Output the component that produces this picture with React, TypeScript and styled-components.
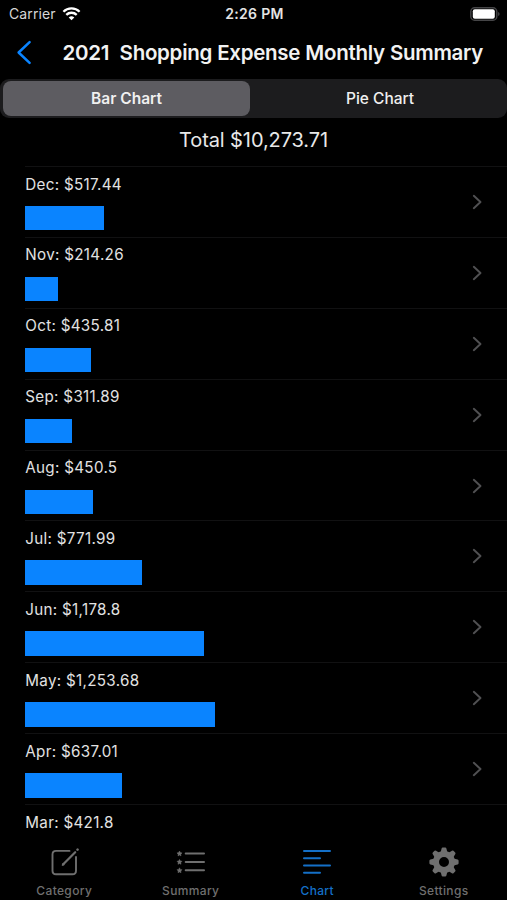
import React from 'react';
import styled, { createGlobalStyle } from 'styled-components';

const GlobalStyle = createGlobalStyle`
  * { box-sizing: border-box; }
  body { margin: 0; background: #000; overflow: hidden; }
`;

const Screen = styled.div`
  width: 507px;
  height: 900px;
  display: flex;
  flex-direction: column;
  overflow: hidden;
  background: #000;
  color: #f2f2f2;
  font-family: Inter, 'Liberation Sans', sans-serif;
  white-space: pre;
`;

const StatusBar = styled.header`
  flex: none;
  height: 27px;
  display: grid;
  grid-template-columns: 1fr auto 1fr;
  align-items: center;
  padding: 1px 7px 0 9px;
  font-size: 14px;
  line-height: 18px;
`;

const Carrier = styled.div`
  display: flex;
  align-items: center;
  gap: 6px;
  letter-spacing: 0.12px;
  color: #d6d6d6;
`;

const Clock = styled.div`
  font-weight: 600;
  letter-spacing: 0.3px;
  color: #e4e4e4;
`;

const Power = styled.div`
  display: flex;
  justify-content: flex-end;
`;

const NavBar = styled.nav`
  flex: none;
  height: 52px;
  display: flex;
  align-items: center;
  padding: 0 0 1px 16px;
`;

const BackButton = styled.button`
  display: flex;
  width: 46.6px;
  padding: 0;
  border: 0;
  background: none;
`;

const Title = styled.h1`
  margin: 0;
  font-size: 20.5px;
  font-weight: 600;
  line-height: 26px;
  letter-spacing: -0.28px;
  word-spacing: 0.3px;
`;

const Segments = styled.div`
  flex: none;
  display: grid;
  grid-template-columns: 247px 1fr;
  height: 39px;
  padding: 2px 0 2px 3px;
  border-radius: 9px;
  background: #1c1c1e;
`;

const Segment = styled.button<{ $active?: boolean }>`
  padding: 1px 0 0 ${(p) => (p.$active ? '0' : '3px')};
  border: 0;
  border-radius: 8px;
  background: ${(p) => (p.$active ? '#5d5c61' : 'transparent')};
  color: #f0f0f0;
  font: ${(p) => (p.$active ? 600 : 500)} 15.5px/20px Inter, sans-serif;
`;

const Total = styled.div`
  flex: none;
  height: 48px;
  padding-top: 9px;
  text-align: center;
  font-size: 20px;
  line-height: 26px;
  letter-spacing: -0.1px;
  color: #e8e8e8;
`;

const List = styled.main`
  flex: 1;
  min-height: 0;
  overflow: hidden;
`;

const Row = styled.div`
  height: 70.9px;
  margin-left: 25.3px;
  padding-right: 25px;
  border-top: 1px solid #111112;
  display: flex;
  align-items: center;
  justify-content: space-between;
`;

const Entry = styled.div`
  align-self: flex-start;
  padding-top: 7.5px;
`;

const Label = styled.div`
  height: 31.5px;
  font-size: 15.2px;
  line-height: 20px;
  letter-spacing: 0.3px;
  color: #e2e2e2;
`;

const Bar = styled.div`
  height: 24.4px;
  background: #0a84ff;
`;

const TabBar = styled.footer`
  flex: none;
  height: 68px;
  display: grid;
  grid-template-columns: repeat(4, 126.5px);
  padding: 7px 0 0 1px;
`;

const Tab = styled.button<{ $active?: boolean }>`
  display: flex;
  flex-direction: column;
  align-items: center;
  padding: 7px 0 0;
  border: 0;
  background: none;
  color: ${(p) => (p.$active ? '#1470c8' : '#6f6f6f')};
`;

const TabLabel = styled.span`
  margin-top: 5px;
  font: 500 12px/16px Inter, sans-serif;
  letter-spacing: 0.35px;
`;

const WifiIcon = () => (
  <svg width="19" height="14" viewBox="0 0 18 14" fill="none" stroke="#fff" strokeWidth="2.3">
    <path d="M.9 4.700a11.500 11.500 0 0 1 16.200 0M3.800 7.900a7.400 7.400 0 0 1 10.400 0" />
    <path d="M9 13.300 6.200 10.500a4 4 0 0 1 5.600 0z" fill="#fff" stroke="none" />
  </svg>
);

const BatteryIcon = () => (
  <svg width="30" height="14" viewBox="0 0 30 14">
    <rect x=".8" y=".8" width="26" height="12.400" rx="3.800" fill="none" stroke="#454547" strokeWidth="1.400" />
    <rect x="2.800" y="2.300" width="22" height="9.400" rx="2" fill="#fff" />
    <path d="M28.300 5a2.300 2.300 0 0 1 0 4z" fill="#59595b" />
  </svg>
);

const BackIcon = () => (
  <svg width="16" height="25" viewBox="0 0 16 25" fill="none" stroke="#0a84ff" strokeWidth="2.5" strokeLinecap="round" strokeLinejoin="round">
    <path d="M13.600 2.200 2.600 12.500 13.600 22.800" />
  </svg>
);

const DisclosureIcon = () => (
  <svg width="12" height="16" viewBox="0 0 12 16" fill="none" stroke="#505052" strokeWidth="1.9" strokeLinecap="round" strokeLinejoin="round">
    <path d="M3.800 1.800 10.500 8l-6.700 6.200" />
  </svg>
);

const ComposeIcon = () => (
  <svg width="32" height="32" viewBox="0 0 32 32" fill="none" stroke="currentColor" strokeWidth="1.9" strokeLinecap="round" strokeLinejoin="round">
    <path d="M21.500 4.900H8Q4.500 4.900 4.500 8.400V24.800q0 3.500 3.500 3.500H24.500q3.500 0 3.500-3.500V11" />
    <path d="M15 18.500 27.200 6.200" strokeWidth="2.200" />
    <path d="m29.500 3.700.1-.1" strokeWidth="2.600" />
    <path d="m14.200 19.200.7-2 1.300 1.300z" fill="currentColor" strokeWidth=".7" />
  </svg>
);

const starPath = (y: number) =>
  `M4.500 ${y - 2.5}l.8 1.600 1.700.3-1.200 1.300.2 1.700L4.500 ${y + 1.6}l-1.500.8.2-1.700L2 ${y - 0.6}l1.700-.3z`;

const ListIcon = () => (
  <svg width="32" height="32" viewBox="0 0 32 32">
    {[7.5, 15.9, 24.3].map((y) => (
      <g key={y}>
        <path d={starPath(y)} fill="currentColor" stroke="currentColor" strokeWidth=".5" />
        <path d={`M10.700 ${y}h18.300`} stroke="currentColor" strokeWidth="2" strokeLinecap="round" />
      </g>
    ))}
  </svg>
);

const ChartIcon = () => (
  <svg width="32" height="32" viewBox="0 0 32 32" fill="none" stroke="currentColor" strokeWidth="2" strokeLinecap="round">
    <path d="M3 5h26M3 12.200h16M3 19.500h26M3 26.700h16" />
  </svg>
);

const GearIcon = () => (
  <svg width="32" height="32" viewBox="-16 -16 32 32" fill="none" stroke="currentColor">
    <circle r="8" strokeWidth="6" />
    {[0, 45, 90, 135, 180, 225, 270, 315].map((a) => (
      <path key={a} d="M-3.400-9.500-2.400-13.600Q-2.200-14.600-1.200-14.600H1.200Q2.200-14.600 2.400-13.600L3.400-9.500Z" fill="currentColor" stroke="none" transform={`rotate(${a})`} />
    ))}
  </svg>
);

const UNIT = 0.1512;

const months = [
  { name: 'Dec', amount: 517.44 },
  { name: 'Nov', amount: 214.26 },
  { name: 'Oct', amount: 435.81 },
  { name: 'Sep', amount: 311.89 },
  { name: 'Aug', amount: 450.5 },
  { name: 'Jul', amount: 771.99 },
  { name: 'Jun', amount: 1178.8 },
  { name: 'May', amount: 1253.68 },
  { name: 'Apr', amount: 637.01 },
  { name: 'Mar', amount: 421.8 },
];

const tabs = [
  { label: 'Category', Icon: ComposeIcon },
  { label: 'Summary', Icon: ListIcon },
  { label: 'Chart', Icon: ChartIcon, active: true },
  { label: 'Settings', Icon: GearIcon },
];

export default function App() {
  return (
    <>
      <GlobalStyle />
      <Screen>
        <StatusBar>
          <Carrier>Carrier<WifiIcon /></Carrier>
          <Clock>2:26 PM</Clock>
          <Power><BatteryIcon /></Power>
        </StatusBar>
        <NavBar>
          <BackButton aria-label="Back"><BackIcon /></BackButton>
          <Title>{'2021  Shopping Expense Monthly Summary'}</Title>
        </NavBar>
        <Segments>
          <Segment $active>Bar Chart</Segment>
          <Segment>Pie Chart</Segment>
        </Segments>
        <Total>Total $10,273.71</Total>
        <List>
          {months.map(({ name, amount }) => (
            <Row key={name}>
              <Entry>
                <Label>{`${name}: $${amount.toLocaleString('en-US')}`}</Label>
                <Bar style={{ width: amount * UNIT }} />
              </Entry>
              <DisclosureIcon />
            </Row>
          ))}
        </List>
        <TabBar>
          {tabs.map(({ label, Icon, active }) => (
            <Tab key={label} $active={active}>
              <Icon />
              <TabLabel>{label}</TabLabel>
            </Tab>
          ))}
        </TabBar>
      </Screen>
    </>
  );
}
